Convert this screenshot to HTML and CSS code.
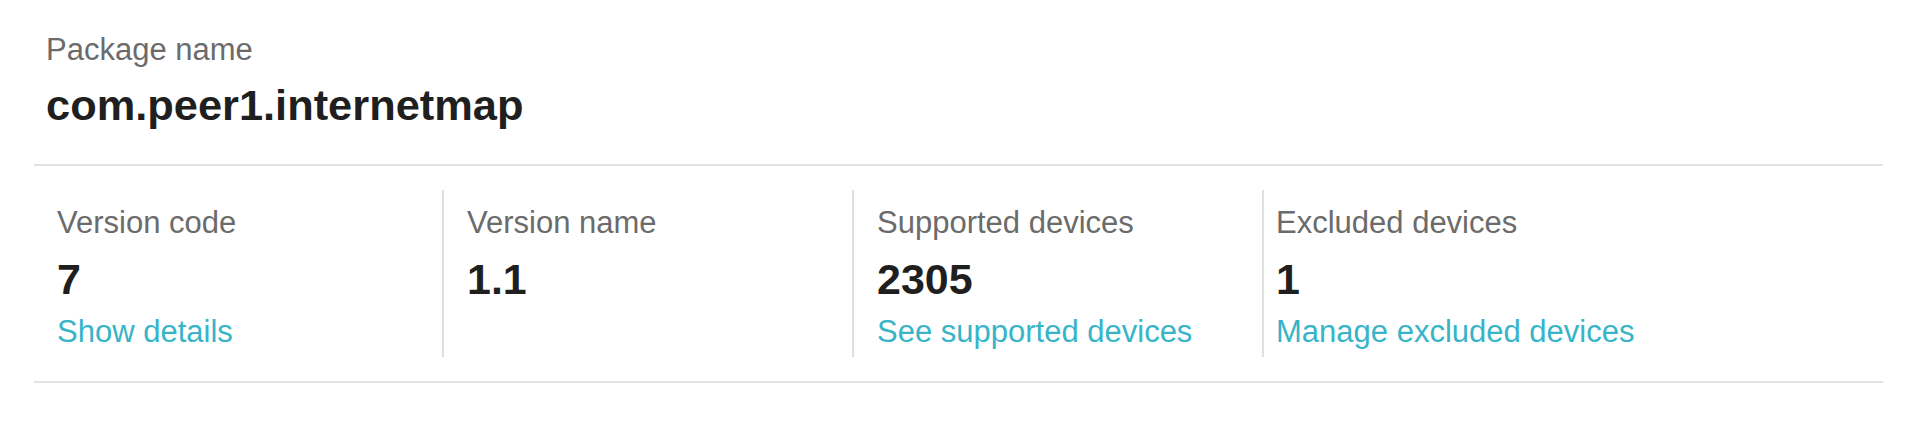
FILE: index.html
```html
<!DOCTYPE html>
<html lang="en">
<head>
<meta charset="utf-8">
<title>Package details</title>
<link rel="stylesheet" href="styles.css">
</head>
<body>
  <main class="panel">
    <section class="package">
      <div class="label">Package name</div>
      <div class="package-name">com.peer1.internetmap</div>
    </section>
    <section class="stats">
      <div class="stat stat-first">
        <div class="label">Version code</div>
        <div class="value">7</div>
        <a class="link" href="#">Show details</a>
      </div>
      <div class="stat">
        <div class="label">Version name</div>
        <div class="value">1.1</div>
      </div>
      <div class="stat">
        <div class="label">Supported devices</div>
        <div class="value">2305</div>
        <a class="link" href="#">See supported devices</a>
      </div>
      <div class="stat stat-last">
        <div class="label">Excluded devices</div>
        <div class="value">1</div>
        <a class="link" href="#">Manage excluded devices</a>
      </div>
    </section>
  </main>
</body>
</html>
```
FILE: styles.css
```css
html, body {
  margin: 0;
  padding: 0;
  background: #ffffff;
}

body {
  font-family: "Liberation Sans", Arial, Helvetica, sans-serif;
  color: #222222;
}

.panel {
  padding: 32px 37px 0 34px;
}

.package {
  padding: 0 0 34px 12px;
  border-bottom: 2px solid #e2e2e2;
}

.label {
  font-size: 31px;
  line-height: 36px;
  color: #6b6b6b;
}

.package-name {
  margin-top: 12px;
  font-size: 43.4px;
  line-height: 50px;
  font-weight: bold;
  color: #1f1f1f;
}

.stats {
  display: grid;
  grid-template-columns: 408px 410px 410px 1fr;
  margin-top: 24px;
  padding-bottom: 24px;
  border-bottom: 2px solid #e2e2e2;
}

.stat {
  display: flex;
  flex-direction: column;
  align-items: flex-start;
  height: 167px;
  box-sizing: border-box;
  padding: 15px 0 0 23px;
  border-left: 2px solid #e0e0e0;
}

.stat-first {
  border-left: none;
}

.stat-last {
  padding-left: 12px;
}

.value {
  margin-top: 13px;
  font-size: 43px;
  line-height: 50px;
  font-weight: bold;
  color: #1f1f1f;
}

.link {
  margin-top: 10px;
  font-size: 31px;
  line-height: 36px;
  color: #38b4c8;
  text-decoration: none;
}
```
